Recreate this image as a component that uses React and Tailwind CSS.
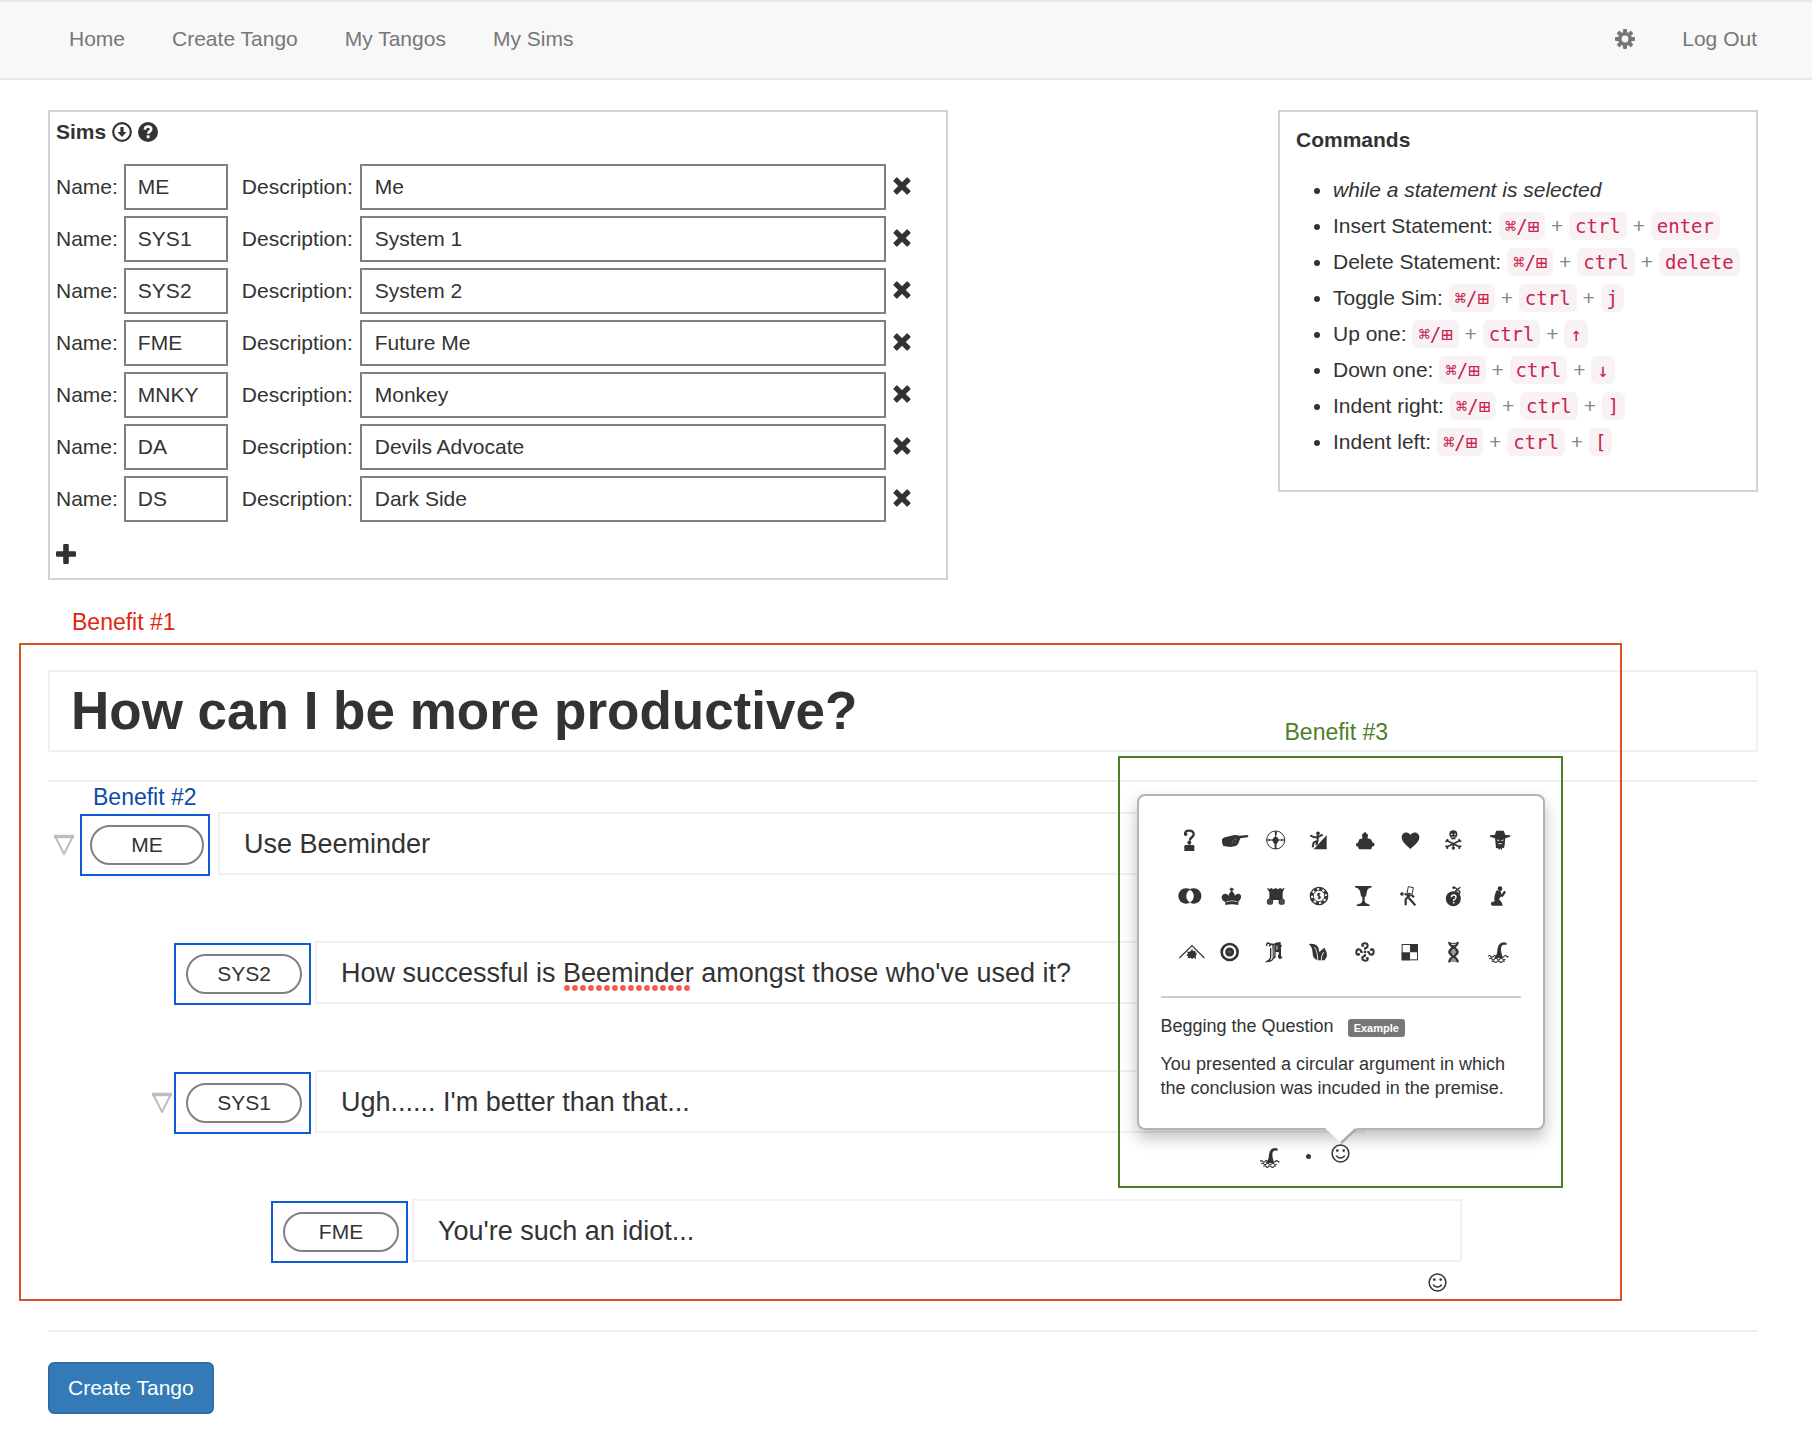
import React from "react";

const sims = [
  ["ME", "Me"],
  ["SYS1", "System 1"],
  ["SYS2", "System 2"],
  ["FME", "Future Me"],
  ["MNKY", "Monkey"],
  ["DA", "Devils Advocate"],
  ["DS", "Dark Side"],
];

const commands = [
  ["Insert Statement:", "enter"],
  ["Delete Statement:", "delete"],
  ["Toggle Sim:", "j"],
  ["Up one:", "↑"],
  ["Down one:", "↓"],
  ["Indent right:", "]"],
  ["Indent left:", "["],
];

function Cog() {
  return (
    <svg viewBox="0 0 20 20" className="size-5" fill="#777">
      {[0, 45, 90, 135].map((a) => (
        <rect key={a} x="8" y="0" width="4" height="20" rx="1" transform={`rotate(${a} 10 10)`} />
      ))}
      <circle cx="10" cy="10" r="7" />
      <circle cx="10" cy="10" r="3.4" fill="#f8f8f8" />
    </svg>
  );
}

function DownCircle() {
  return (
    <svg viewBox="0 0 20 20" className="size-5" fill="#333">
      <circle cx="10" cy="10" r="8.8" fill="none" stroke="#333" strokeWidth="2.2" />
      <path d="M8.400 5h3.200v5h3L10 15 5.400 10h3z" />
    </svg>
  );
}

function HelpCircle() {
  return (
    <svg viewBox="0 0 20 20" className="size-5">
      <circle cx="10" cy="10" r="10" fill="#333" />
      <path d="M6.8 7.6C7 5.4 8.200 4.500 10 4.500s3.200 1 3.200 2.800c0 2.200-3 2-3 4.500" fill="none" stroke="#fff" strokeWidth="2.600" />
      <rect x="8.700" y="13.300" width="2.900" height="2.900" fill="#fff" />
    </svg>
  );
}

function Cross() {
  return (
    <svg viewBox="0 0 18 18" className="size-[18px]" fill="#333">
      <rect x="-1" y="6.300" width="20" height="5.400" rx="1" transform="rotate(45 9 9)" />
      <rect x="-1" y="6.300" width="20" height="5.400" rx="1" transform="rotate(-45 9 9)" />
    </svg>
  );
}

function Plus() {
  return (
    <svg viewBox="0 0 20 20" className="size-5" fill="#333">
      <rect x="0" y="7.200" width="20" height="5.600" rx="1" />
      <rect x="7.200" y="0" width="5.600" height="20" rx="1" />
    </svg>
  );
}

function Smiley() {
  return (
    <svg viewBox="0 0 19 19" className="size-[19px]" fill="none" stroke="#333" strokeWidth="1.500">
      <circle cx="9.500" cy="9.500" r="8.400" />
      <path d="M5.300 11.500c1.600 3.200 6.800 3.200 8.400 0" />
      <circle cx="6.300" cy="6.600" r="1.300" fill="#333" stroke="none" />
      <circle cx="12.700" cy="6.600" r="1.300" fill="#333" stroke="none" />
    </svg>
  );
}

function Triangle() {
  return (
    <svg viewBox="0 0 22 22" className="h-[22px] w-[22px]" fill="none" stroke="#bdbdbd" strokeLinejoin="round">
      <path d="M2 2 11 20 20 2" strokeWidth="2" />
      <path d="M1 2.500H21" strokeWidth="3.500" />
    </svg>
  );
}

const line = { fill: "none", stroke: "#333" };

const nessie = (
  <>
    <path d="M30 60C44 50 37 30 45 20c5-7 17-10 23-4 1 3-1 5-3 5-9-3-13 2-14 10-1 9 3 18 5 29z" />
    <path d="M12 55q4-5 8 0t8 0 8 0 8 0 8 0 8 0 8 0 4-1" {...line} strokeWidth="3.500" />
    <path d="M16 63q4-5 8 0t8 0 8 0 8 0 8 0 8 0" {...line} strokeWidth="3.500" />
    <path d="M23 71q4-5 8 0t8 0 8 0 8 0 7 0" {...line} strokeWidth="3.500" />
  </>
);

const fallacies = [
  ["Begging the question", <>
    <path d="M31 27C28 17 34 14 43 14s14 5 13 12c-1 8-11 8-12 18" {...line} strokeWidth="7" />
    <circle cx="32" cy="25" r="5" />
    <circle cx="43" cy="50" r="6" />
    <path d="M28 75V61q0-4 5-4h20q5 0 5 4v14z" />
  </>],
  ["Pointing hand", <>
    <path d="M9 40Q14 32 24 32L46 27Q54 26 60 29L86 27Q91 30 86 34L64 37 60 47Q60 54 50 60L34 63 13 60Q8 54 9 40z" />
    <path d="M40 44l3 2M47 40l4 1M38 52l3-1M48 50l3-3" stroke="#bbb" strokeWidth="2" />
  </>],
  ["Compass", <>
    <circle cx="38" cy="42" r="27" {...line} strokeWidth="3" />
    <path d="M38 15V69M11 42H65" {...line} strokeWidth="3.500" />
    <path d="M35 18h7l-2 10h-3zM33 34q5-4 10 0l5 8-5 9-3 4v14h-5V55l-3-4-5-9zM17 38v8l7-4zM59 38v8l-7-4z" />
  </>],
  ["Slippery slope", <>
    <path d="M20 70 59 28V70z" />
    <circle cx="33" cy="22" r="5.500" />
    <path d="M10 28l11 6 11 0 15-8M32 27v17L20 50l-3 14M32 44l-4 14" {...line} strokeWidth="6" />
  </>],
  ["Authority", <>
    <path d="M39 17l4 5q6 3 5 9l-2 6 11 3 4 9 6 3v7l-7 3-2 8H21l-3-8-6-3v-6l6-3 4-10 10-3-2-6q-1-7 5-9z" />
  </>],
  ["Heart", <path d="M43 69C34 60 17 49 17 34 17 17 38 15 43.500 27 49 15 70 17 70 34 70 49 53 60 43 69z" />],
  ["Poison", <>
    <circle cx="40" cy="25" r="12" />
    <rect x="34" y="32" width="12" height="8" />
    <circle cx="35" cy="25" r="2.500" fill="#fff" />
    <circle cx="45" cy="25" r="2.500" fill="#fff" />
    <path d="M34 33h12" stroke="#fff" strokeWidth="2" />
    <path d="M19 43 61 64M61 43 19 64M40 50V71M35 66h10" {...line} strokeWidth="5" />
    <path d="M16 46l6-1 1-6M64 46l-6-1-1-6M16 60l6 2 0 7M64 60l-6 2 0 7" {...line} strokeWidth="5" />
  </>],
  ["Straw man", <>
    <path d="M37 14h22l5 13 15 1v4L64 37H33L18 32v-4l14-1z" />
    <path d="M33 35H64L62 57l-2 9-5-1-2 7-4-5-4 5-3-6-6 1-1-10z" />
    <path d="M39 42l7 2M59 42l-7 2M43 53h11" stroke="#fff" strokeWidth="2.500" />
  </>],
  ["Overlap", <>
    <rect x="10" y="19" width="46" height="46" rx="22" />
    <rect x="33" y="19" width="46" height="46" rx="22" />
    <path d="M45 23C30 32 30 52 45 62 60 52 60 32 45 23z" fill="#fff" />
  </>],
  ["Crown", <>
    <path d="M38 17v13M32 22h12" {...line} strokeWidth="5" />
    <path d="M19 69l0-9C6 54 4 42 15 36q9-2 14 5 2-12 9-12t10 12q5-7 14-5 11 8-4 24v9q-20-5-39 0z" />
    <path d="M22 59q17-5 33 0" stroke="#fff" strokeWidth="2" fill="none" />
  </>],
  ["Bandwagon", <>
    <path d="M11 17l8 4 6-3 6 4 7-4 7 4 6-4 6 3 8-4-6 14v18l2 5H16l3-5V31z" />
    <circle cx="21" cy="59" r="9.500" />
    <circle cx="56" cy="59" r="9.500" />
    <circle cx="21" cy="59" r="5" fill="none" stroke="#999" strokeWidth="1.500" />
    <circle cx="56" cy="59" r="5" fill="none" stroke="#999" strokeWidth="1.500" />
  </>],
  ["Casino chip", <>
    <circle cx="36" cy="42" r="26" {...line} strokeWidth="4" />
    <circle cx="36" cy="42" r="21.500" {...line} strokeWidth="8" strokeDasharray="10 6.900" />
    <circle cx="36" cy="42" r="17" {...line} strokeWidth="2.500" />
    <path d="M40 36q-8-3-8 2 0 3 4 4t4 4q0 4-8 2M36 32v20" {...line} strokeWidth="3.500" />
  </>],
  ["Goblet", <path d="M9 12H59V16Q48 18 45 27L42 42 38 46V58L42 64 53 68V72H14V68L27 64 31 58V46L27 42 24 27Q20 18 9 16z" />],
  ["Runner", <>
    <circle cx="18" cy="36" r="5.500" />
    <path d="M37 14l15 3-4 19-15-3z" {...line} strokeWidth="3" />
    <path d="M26 36l18 5M40 40L29 52v18M38 47l8 9 12 14M46 38l8 8" {...line} strokeWidth="6.500" />
  </>],
  ["Loaded question", <>
    <circle cx="40" cy="50" r="22.500" />
    <path d="M46 28l4-5 10 6-2 7zM40 18q6-3 9 2t12-4" {...line} strokeWidth="4" />
    <circle cx="41" cy="17" r="4" />
    <path d="M34 46q0-7 7-7t7 6-7 9v3" fill="none" stroke="#fff" strokeWidth="4" />
    <circle cx="41" cy="62" r="2.500" fill="#fff" />
  </>],
  ["Kneeling", <>
    <circle cx="48" cy="20" r="7" />
    <path d="M38 25l12 3 3 12-8 12 8 9 3 10H24q-6-5-2-10l10-3q-4-14 6-33z" />
    <path d="M44 38l11 3 8-13" {...line} strokeWidth="7" />
  </>],
  ["Mountain", <>
    <path d="M13 60 51 23 88 60" {...line} strokeWidth="3.500" />
    <path d="M51 36l4 3 6-1 0 6 5 4-4 5 1 7-7-1-5 4-4-4-7 2-1-6-5-3 5-5-2-6 7 0z" />
    <path d="M37 42l4 3M66 41l-3 3M38 60l4-3M62 63l-2-3M51 33v4" {...line} strokeWidth="3" />
  </>],
  ["Target", <>
    <circle cx="32" cy="42" r="24" {...line} strokeWidth="8" />
    <circle cx="32" cy="42" r="13.500" />
    <path d="M29 38l2 7M34 40l2 3" stroke="#aaa" strokeWidth="2" />
  </>],
  ["Gothic", <>
    <path d="M12 24q-3-9 4-9 6 1 4 7t4-4l7 1v42q-6 10-20 10l8-6 4-6V30" {...line} strokeWidth="4" />
    <path d="M28 22q9-10 18-9l7-1v8l4 2-3 6v26l5 5-9 5-5-6V42h-7v16l-5 4z" />
    <path d="M31 22v36M35 20v34" stroke="#999" strokeWidth="2" />
    <path d="M42 23v12M46 42v9" stroke="#fff" strokeWidth="2.500" />
  </>],
  ["Natural", <>
    <path d="M5 18Q36 14 37 42L52 29Q61 42 60 54L53 67H32Q17 62 17 46 17 28 5 18z" />
    <path d="M22 27Q32 38 32 66M50 42Q42 54 43 66" fill="none" stroke="#fff" strokeWidth="2.500" />
  </>],
  ["Circular", <>
    {[0, 90, 180, 270].map((a) => (
      <g key={a} transform={`rotate(${a} 39 42)`}>
        <path d="M31 22q-1-6 7-6 9 0 9 7 0 6-8 8v4" {...line} strokeWidth="6" />
        <circle cx="32" cy="23" r="4" />
      </g>
    ))}
    <circle cx="39" cy="42" r="4" />
  </>],
  ["Black or white", <>
    <rect x="18.500" y="19.500" width="46" height="46" {...line} strokeWidth="3" />
    <path d="M42 18H66V43H42zM17 43H42V67H17z" />
  </>],
  ["Genetic", <>
    <path d="M28 12C26 28 53 30 53 42S26 56 28 73M53 12C55 28 28 30 28 42S55 56 53 73" {...line} strokeWidth="7" />
    <path d="M30 16h22M33 22h16M30 39h22M30 45h22M33 63h16M30 69h22" {...line} strokeWidth="3" />
  </>],
  ["Anecdotal", nessie],
];

function Glyph({ children }) {
  return (
    <svg viewBox="0 0 84 84" className="size-7 overflow-visible" fill="#333">
      {children}
    </svg>
  );
}

function Popover() {
  return (
    <div className="absolute bottom-full left-1/2 z-10 mb-3.5 w-[408px] -translate-x-1/2 rounded-lg border-2 border-[#b4b4b4] bg-white px-[22px] pt-[30px] pb-7 shadow-[0_8px_16px_rgba(0,0,0,0.25)]">
      <div className="pointer-events-none absolute -top-10 -right-5 -bottom-[60px] -left-[21px] border-2 border-[#4d7e29]">
        <span className="absolute -top-[41px] left-[165px] text-[23px] leading-[30px] whitespace-nowrap text-[#4d7e29]">Benefit #3</span>
      </div>
      <div className="grid grid-cols-8 gap-y-7 pl-1.5">
        {fallacies.map(([name, art]) => (
          <button key={name} type="button" aria-label={name} className="flex justify-center">
            <Glyph>{art}</Glyph>
          </button>
        ))}
      </div>
      <hr className="mt-[30px] border-t-2 border-[#ccc]" />
      <div className="mt-4 flex items-center gap-[14px] text-lg leading-6">
        Begging the Question
        <a href="#example" className="mt-1 rounded-[3px] bg-[#777] px-1.5 text-[11px] leading-[18px] font-bold text-white">Example</a>
      </div>
      <p className="mt-[14px] text-lg leading-6">You presented a circular argument in which the conclusion was incuded in the premise.</p>
      <svg viewBox="0 0 32 17" className="absolute top-full left-1/2 h-[17px] w-8 -translate-x-1/2">
        <path d="M0 0H32L16 15z" fill="#fff" />
        <path d="M31 1 16 15" stroke="#aaa" strokeWidth="2.500" />
      </svg>
    </div>
  );
}

const statements = [
  { name: "ME", text: "Use Beeminder", indent: "pl-0", open: true, label: true },
  { name: "SYS2", text: "How successful is Beeminder amongst those who've used it?", indent: "pl-[97px]", typo: true },
  { name: "SYS1", text: "Ugh...... I'm better than that...", indent: "pl-[97px]", open: true, popover: true },
  { name: "FME", text: "You're such an idiot...", indent: "pl-[194px]", smile: true },
];

function Statement({ s }) {
  return (
    <div className={`flex items-start ${s.indent}`}>
      <div className={`mt-0.5 flex w-[170px] shrink-0 items-center justify-end ${s.label ? "pr-2" : "pr-1"}`}>
        {s.open && (
          <button type="button" aria-label="Collapse" className={s.label ? "mr-[5px]" : "mr-px"}>
            <Triangle />
          </button>
        )}
        <div className={`relative border-2 border-[#0f5bd3] py-[9px] ${s.label ? "w-[130px] pr-1 pl-2" : "w-[137px] pr-[7px] pl-2.5"}`}>
          {s.label && (
            <span className="absolute -top-[34px] left-[11px] text-[23px] leading-[30px] whitespace-nowrap text-[#0b4aae]">Benefit #2</span>
          )}
          <button type="button" className="block w-full rounded-full border-2 border-[#808080] py-0.5 text-center text-[21px] leading-8">
            {s.name}
          </button>
        </div>
      </div>
      <div className="w-[1050px]">
        <div className="relative">
          <input
            aria-label={`${s.name} statement`}
            defaultValue={s.text}
            spellCheck={false}
            className="block w-full border-2 border-[#f0f0f0] bg-transparent px-6 pt-[15px] pb-3.5 text-[27px] leading-[30px] outline-none"
          />
          {s.typo && (
            <svg className="absolute top-11 left-[248px] h-1.5 w-32">
              <defs>
                <pattern id="misspelt" width="8" height="6" patternUnits="userSpaceOnUse">
                  <circle cx="4" cy="3" r="2.900" fill="#fa5a50" />
                </pattern>
              </defs>
              <rect width="128" height="6" fill="url(#misspelt)" />
            </svg>
          )}
        </div>
        <div className="flex h-[30px] items-start justify-end pt-[11px] pr-[15px]">
          {s.popover && (
            <>
              <span className="mr-[26px] -mb-3 pt-[3px]">
                <svg viewBox="12 10 63 65" className="h-[21px] w-5" fill="#333">{nessie}</svg>
              </span>
              <span className="mt-[10px] mr-5 size-[5px] rounded-full bg-[#333]" />
            </>
          )}
          {(s.popover || s.smile) && (
            <div className="relative">
              <button type="button" aria-label="Choose a fallacy" className="block">
                <Smiley />
              </button>
              {s.popover && <Popover />}
            </div>
          )}
        </div>
      </div>
    </div>
  );
}

function Key({ children }) {
  return (
    <code className="rounded-md bg-[#f9f2f4] px-1.5 py-[3px] font-['DejaVu_Sans_Mono',monospace] text-[19px] text-[#c7254e]">{children}</code>
  );
}

export default function App() {
  return (
    <div className="min-h-screen bg-white pb-[22px] font-['Liberation_Sans',Arial,sans-serif] text-[21px] leading-[30px] text-[#333]">
      <nav className="flex justify-between border-y-2 border-[#e7e7e7] bg-[#f8f8f8] pt-[22px] pr-[55px] pb-6 pl-[69px] text-[#777]">
        <div className="flex gap-[47px]">
          <a href="#home">Home</a>
          <a href="#create">Create Tango</a>
          <a href="#tangos">My Tangos</a>
          <a href="#sims">My Sims</a>
        </div>
        <div className="flex items-center gap-[47px]">
          <a href="#settings" aria-label="Settings"><Cog /></a>
          <a href="#logout">Log Out</a>
        </div>
      </nav>

      <main className="pt-[30px] pr-[54px] pl-12">
        <div className="flex items-start justify-between">
          <section className="w-[900px] border-2 border-[#d3d3d3] px-1.5 pt-[5px] pb-2">
            <h2 className="flex items-center gap-1.5 font-bold">
              Sims
              <button type="button" aria-label="Collapse sims"><DownCircle /></button>
              <button type="button" aria-label="Help"><HelpCircle /></button>
            </h2>
            <div className="mt-[17px] flex flex-col gap-1.5">
              {sims.map(([name, desc]) => (
                <div key={name} className="flex items-center">
                  <label htmlFor={`n-${name}`}>Name:</label>
                  <input id={`n-${name}`} defaultValue={name} className="mr-3.5 ml-1.5 w-[104px] border-2 border-[#808080] px-3 py-1.5 leading-[30px]" />
                  <label htmlFor={`d-${name}`}>Description:</label>
                  <input id={`d-${name}`} defaultValue={desc} className="ml-[7px] min-w-0 flex-1 border-2 border-[#808080] px-[13px] py-1.5 leading-[30px]" />
                  <button type="button" aria-label={`Remove ${name}`} className="mr-[29px] mb-[3px] ml-[7px]"><Cross /></button>
                </div>
              ))}
            </div>
            <button type="button" aria-label="Add sim" className="mt-[17px] mb-px flex h-[30px] items-center"><Plus /></button>
          </section>

          <section className="w-[480px] border-2 border-[#d3d3d3] px-4 pt-[13px] pb-[30px]">
            <h2 className="font-bold">Commands</h2>
            <ul className="mt-[17px] list-disc pl-[37px] leading-9">
              <li className="italic">while a statement is selected</li>
              {commands.map(([label, key]) => (
                <li key={label} className="whitespace-nowrap">
                  {label} <Key>⌘/⊞</Key> <span className="text-[#888]">+</span> <Key>ctrl</Key> <span className="text-[#888]">+</span> <Key>{key}</Key>
                </li>
              ))}
            </ul>
          </section>
        </div>

        <section className="relative mt-[90px]">
          <div className="pointer-events-none absolute -top-[27px] right-[136px] -bottom-[9px] -left-[29px] z-20 border-2 border-[#d8541f]" />
          <span className="absolute -top-[63px] left-6 text-[23px] text-[#e2260f]">Benefit #1</span>
          <input
            aria-label="Question"
            defaultValue="How can I be more productive?"
            spellCheck={false}
            className="block w-full border-2 border-[#f0f0f0] px-[21px] py-2 text-[53px] leading-[62px] font-bold outline-none"
          />
          <hr className="mt-7 border-t-2 border-[#eee]" />
          <div className="mt-[30px] flex flex-col gap-9">
            {statements.map((s) => <Statement key={s.name} s={s} />)}
          </div>
        </section>

        <hr className="mt-[38px] border-t-2 border-[#eee]" />
        <button type="button" className="mt-[30px] block rounded-md border-2 border-[#2e6da4] bg-[#337ab7] px-[18px] py-[9px] text-white">
          Create Tango
        </button>
      </main>
    </div>
  );
}
